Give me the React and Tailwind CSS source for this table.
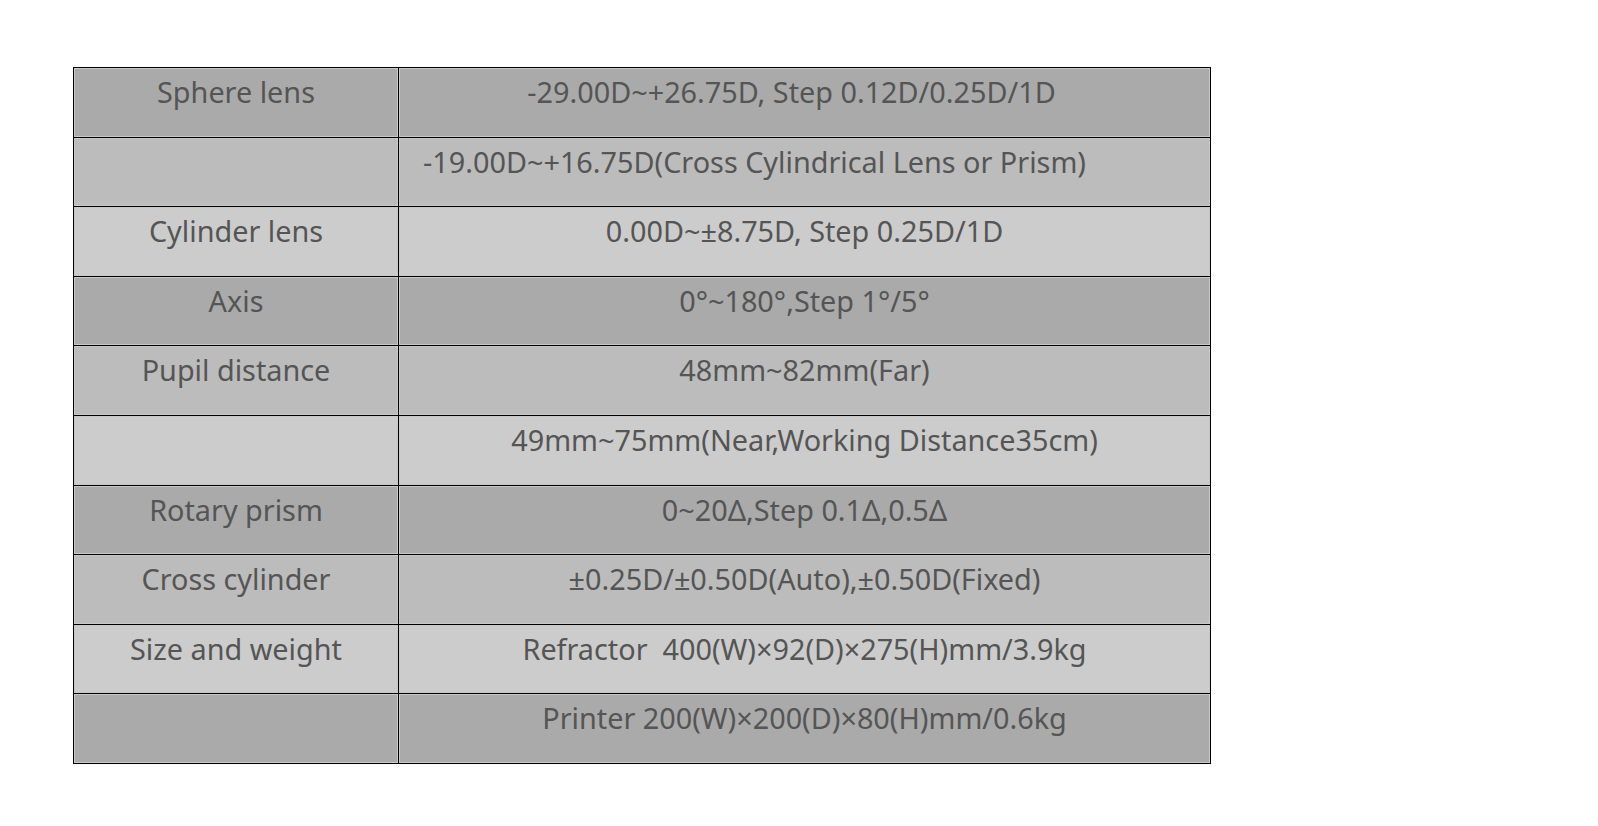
import React from "react";

const rows = [
  { label: "Sphere lens", value: "-29.00D~+26.75D, Step 0.12D/0.25D/1D", bg: "bg-[#aaaaaa]", pad: "pr-[34px]" },
  { label: "", value: "-19.00D~+16.75D(Cross Cylindrical Lens or Prism)", bg: "bg-[#bcbcbc]", pad: "pr-[108px]" },
  { label: "Cylinder lens", value: "0.00D~±8.75D, Step 0.25D/1D", bg: "bg-[#cccccc]" },
  { label: "Axis", value: "0°~180°,Step 1°/5°", bg: "bg-[#aaaaaa]" },
  { label: "Pupil distance", value: "48mm~82mm(Far)", bg: "bg-[#bcbcbc]" },
  { label: "", value: "49mm~75mm(Near,Working Distance35cm)", bg: "bg-[#cccccc]" },
  { label: "Rotary prism", value: "0~20Δ,Step 0.1Δ,0.5Δ", bg: "bg-[#aaaaaa]" },
  { label: "Cross cylinder", value: "±0.25D/±0.50D(Auto),±0.50D(Fixed)", bg: "bg-[#bcbcbc]" },
  { label: "Size and weight", value: "Refractor\u00a0 400(W)×92(D)×275(H)mm/3.9kg", bg: "bg-[#cccccc]" },
  { label: "", value: "Printer 200(W)×200(D)×80(H)mm/0.6kg", bg: "bg-[#aaaaaa]" },
];

const Specs = () => {
  return (
    <div className="min-h-screen bg-white pt-[67px] pl-[73px] font-['Noto_Sans','Open_Sans',sans-serif]">
      <table className="w-[1138px] border-collapse border border-black text-[28.8px] text-[#555555]">
        <tbody>
          {rows.map((r, i) => (
            <tr key={i} className={r.bg}>
              <td className="w-[325px] h-[69.6px] border border-black px-2 pt-[5px] align-top text-center leading-[38px] shadow-[inset_0_0_0_1px_#c8c8c8]">
                {r.label}
              </td>
              <td
                className={
                  "h-[69.6px] border border-black px-2 pt-[5px] align-top text-center leading-[38px] shadow-[inset_0_0_0_1px_#c8c8c8] " +
                  (r.pad || "")
                }
              >
                {r.value}
              </td>
            </tr>
          ))}
        </tbody>
      </table>
    </div>
  );
};

export default Specs;
